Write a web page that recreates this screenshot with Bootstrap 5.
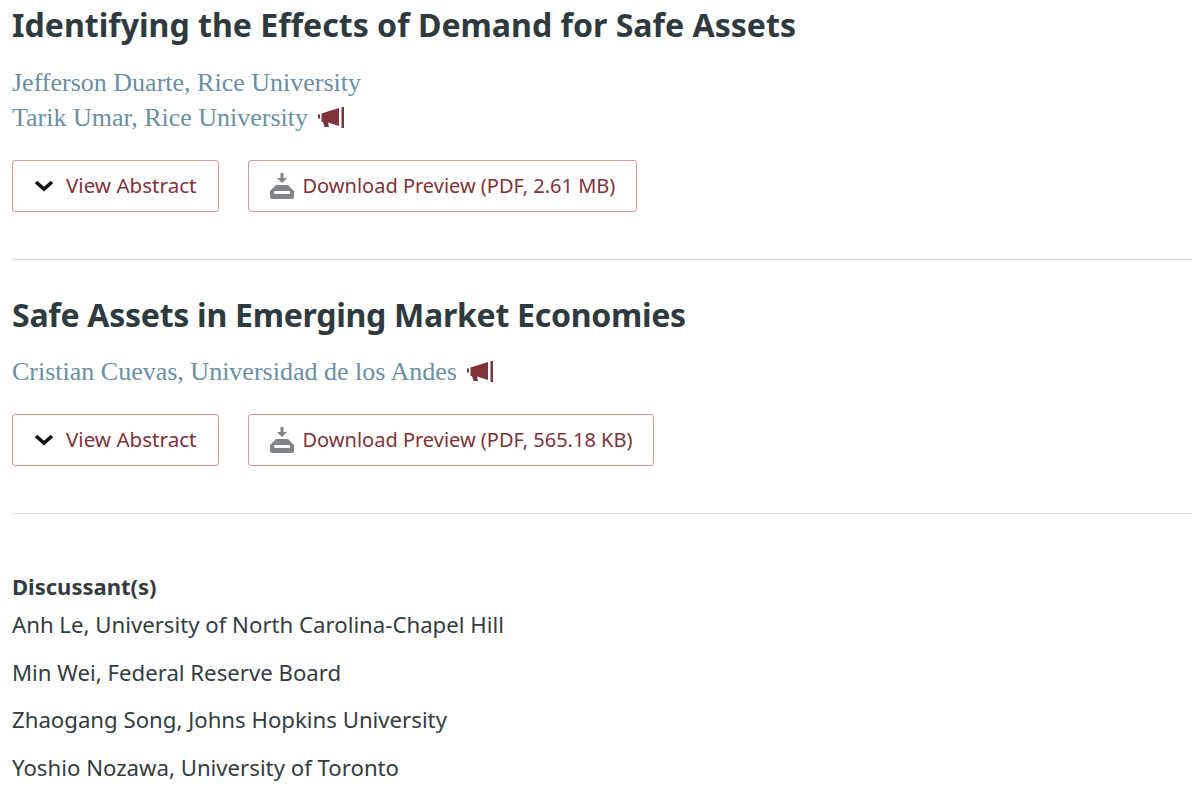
<!doctype html>
<html lang="en"><head><meta charset="utf-8"><title>Papers</title>
<link href="https://cdn.jsdelivr.net/npm/bootstrap@5.3.0/dist/css/bootstrap.min.css" rel="stylesheet">
<style>
html,body{background:#fff;overflow:hidden}
.sheet{padding:0 8px 0 12px;font-family:"Noto Sans",sans-serif;color:#333c40}
.ptitle{font:700 32.1px/38px "Noto Sans",sans-serif;color:#2f3a3e;margin:6px 0 21px}
.authors{font:400 26px/35px "Liberation Serif",serif;color:#6a8ea3;margin:0 0 25px}
.authors div{height:35px}
.authorline{gap:10px}
.acts{gap:29px;margin-bottom:47px}
.actbtn{height:52px;border:1px solid #d59a9a;border-radius:3px;padding:0 21px;font-size:20px;color:#80323a;background:#fff;--bs-btn-hover-color:#80323a;--bs-btn-hover-bg:#fff;--bs-btn-hover-border-color:#d59a9a}
.viewlabel{font-size:20.6px;margin-left:12px;line-height:24px;margin-bottom:2px}
.dlicon{margin-right:9px}
.sep{margin:0 0 36px;border-color:#d8dcde;opacity:1}
.sec2 .ptitle{margin-top:0;margin-bottom:20px;letter-spacing:-.3px}
.sep2{margin-top:0;margin-bottom:58px}
.dhead{font-weight:700;font-size:22px;line-height:28px;margin-bottom:9px}
.dname{font-size:22.2px;line-height:32px;margin-bottom:15.6px}
</style></head><body>
<main class="sheet">
<section>
<h2 class="ptitle">Identifying the Effects of Demand for Safe Assets</h2>
<div class="authors"><div>Jefferson Duarte, Rice University</div>
<div class="d-flex align-items-center authorline">Tarik Umar, Rice University
<svg width="28" height="22" viewBox="0 0 28 22" aria-hidden="true"><path fill="#80323a" d="M0 7.500h2v4H0zM3.500 6.500L21 1v18l-11-3.500 1 4.500H6.500L5 15H3.500z"/><rect x="23.500" y="0" width="2.500" height="21" fill="#80323a"/></svg></div></div>
<div class="d-flex acts">
<button class="btn actbtn d-flex align-items-center"><svg width="20" height="14" viewBox="0 0 20 14" aria-hidden="true"><path d="M2 3l8 7 8-7" fill="none" stroke="#111" stroke-width="3.600"/></svg><span class="viewlabel">View Abstract</span></button>
<button class="btn actbtn d-flex align-items-center"><svg class="dlicon" width="24" height="26" viewBox="0 0 24 26" aria-hidden="true"><path fill="#808486" d="M10.500 0h3v5H17l-5 5-5-5h3.500zM6 12h12l6 6v6a2 2 0 0 1-2 2H2a2 2 0 0 1-2-2v-6z"/><rect x="4" y="18" width="16" height="3" rx="1" fill="#fff"/></svg>Download Preview (PDF, 2.61 MB)</button>
</div>
</section>
<hr class="sep">
<section class="sec2">
<h2 class="ptitle">Safe Assets in Emerging Market Economies</h2>
<div class="authors"><div class="d-flex align-items-center authorline">Cristian Cuevas, Universidad de los Andes
<svg width="28" height="22" viewBox="0 0 28 22" aria-hidden="true"><path fill="#80323a" d="M0 7.500h2v4H0zM3.500 6.500L21 1v18l-11-3.500 1 4.500H6.500L5 15H3.500z"/><rect x="23.500" y="0" width="2.500" height="21" fill="#80323a"/></svg></div></div>
<div class="d-flex acts">
<button class="btn actbtn d-flex align-items-center"><svg width="20" height="14" viewBox="0 0 20 14" aria-hidden="true"><path d="M2 3l8 7 8-7" fill="none" stroke="#111" stroke-width="3.600"/></svg><span class="viewlabel">View Abstract</span></button>
<button class="btn actbtn d-flex align-items-center"><svg class="dlicon" width="24" height="26" viewBox="0 0 24 26" aria-hidden="true"><path fill="#808486" d="M10.500 0h3v5H17l-5 5-5-5h3.500zM6 12h12l6 6v6a2 2 0 0 1-2 2H2a2 2 0 0 1-2-2v-6z"/><rect x="4" y="18" width="16" height="3" rx="1" fill="#fff"/></svg>Download Preview (PDF, 565.18 KB)</button>
</div>
</section>
<hr class="sep sep2">
<section>
<div class="dhead">Discussant(s)</div>
<div class="dname">Anh Le, University of North Carolina-Chapel Hill</div>
<div class="dname">Min Wei, Federal Reserve Board</div>
<div class="dname">Zhaogang Song, Johns Hopkins University</div>
<div class="dname">Yoshio Nozawa, University of Toronto</div>
</section>
</main>
</body></html>
